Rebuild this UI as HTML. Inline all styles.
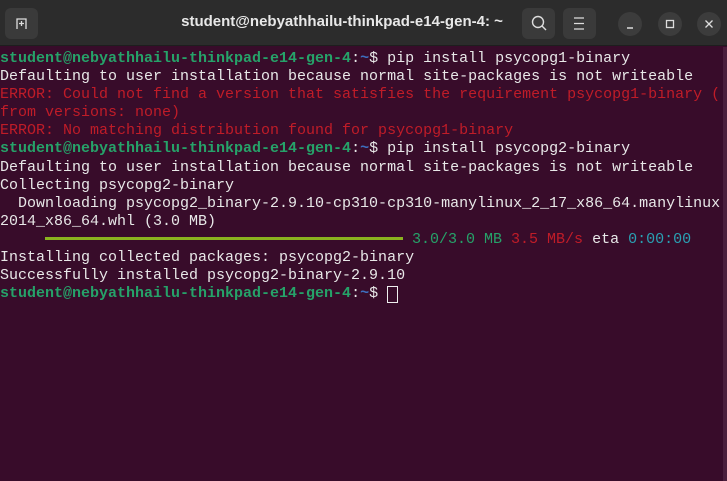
<!DOCTYPE html>
<html><head><style>
html,body{margin:0;padding:0;width:727px;height:481px;overflow:hidden;background:#380c2a;}
.tb{position:absolute;left:0;top:0;width:727px;height:46px;background:#2c2c2c;border-bottom:1px solid #1e1e1e;box-sizing:border-box;}
.title{position:absolute;left:0;width:684px;top:13px;text-align:center;color:#e8e8e8;font:bold 15px "Liberation Sans",sans-serif;}
.btn{position:absolute;top:8px;width:33px;height:31px;border-radius:6px;background:#3a3a3a;}
.circ{position:absolute;top:12px;width:24px;height:24px;border-radius:12px;background:#3c3c3c;}
.term{position:absolute;left:0;top:50px;font:15px/18.1px "Liberation Mono",monospace;color:#e8e8e8;white-space:pre;}
.g{color:#26a269;font-weight:bold}.b{color:#3d6fbf;font-weight:bold}.r{color:#c01c28}.gg{color:#26a269}.c{color:#2aa1b3}
.bar{display:inline-block;width:358px;height:3px;background:#8ab31f;vertical-align:middle;margin-right:9px}
.cur{display:inline-block;width:11px;height:17px;border:1px solid #eee;box-sizing:border-box;vertical-align:top;margin-top:1px}
.sb{position:absolute;right:0;top:47px;width:4px;height:434px;background:#4a1e3c}
</style></head><body>
<div class="tb">
<div class="btn" style="left:5px"><svg width="33" height="31"><path d="M12 21V11h9v10M16.5 13v5M14 15.5h5" stroke="#ddd" stroke-width="1.3" fill="none"/></svg></div>
<div class="title">student@nebyathhailu-thinkpad-e14-gen-4: ~</div>
<div class="btn" style="left:522px"><svg width="33" height="31"><circle cx="16" cy="14" r="5.5" stroke="#ddd" stroke-width="1.4" fill="none"/><path d="M20 18l4 4" stroke="#ddd" stroke-width="1.4"/></svg></div>
<div class="btn" style="left:563px"><svg width="33" height="31"><path d="M11 10h10M11 15.5h10M11 21h10" stroke="#ddd" stroke-width="1.3"/></svg></div>
<div class="circ" style="left:618px"><svg width="24" height="24"><path d="M9 16h6" stroke="#ddd" stroke-width="1.5"/></svg></div>
<div class="circ" style="left:658px"><svg width="24" height="24"><rect x="8.5" y="8.5" width="7" height="7" stroke="#ddd" stroke-width="1.3" fill="none"/></svg></div>
<div class="circ" style="left:697px"><svg width="24" height="24"><path d="M8.5 8.5l7 7M15.5 8.5l-7 7" stroke="#ddd" stroke-width="1.3"/></svg></div>
</div>
<div class="sb"></div>
<div class="term"><span class="g">student@nebyathhailu-thinkpad-e14-gen-4</span>:<span class="b">~</span>$ pip install psycopg1-binary
Defaulting to user installation because normal site-packages is not writeable
<span class="r">ERROR: Could not find a version that satisfies the requirement psycopg1-binary (</span>
<span class="r">from versions: none)</span>
<span class="r">ERROR: No matching distribution found for psycopg1-binary</span>
<span class="g">student@nebyathhailu-thinkpad-e14-gen-4</span>:<span class="b">~</span>$ pip install psycopg2-binary
Defaulting to user installation because normal site-packages is not writeable
Collecting psycopg2-binary
  Downloading psycopg2_binary-2.9.10-cp310-cp310-manylinux_2_17_x86_64.manylinux
2014_x86_64.whl (3.0 MB)
     <span class="bar"></span><span class="gg">3.0/3.0 MB</span> <span class="r">3.5 MB/s</span> eta <span class="c">0:00:00</span>
Installing collected packages: psycopg2-binary
Successfully installed psycopg2-binary-2.9.10
<span class="g">student@nebyathhailu-thinkpad-e14-gen-4</span>:<span class="b">~</span>$ <span class="cur"></span></div>
</body></html>
